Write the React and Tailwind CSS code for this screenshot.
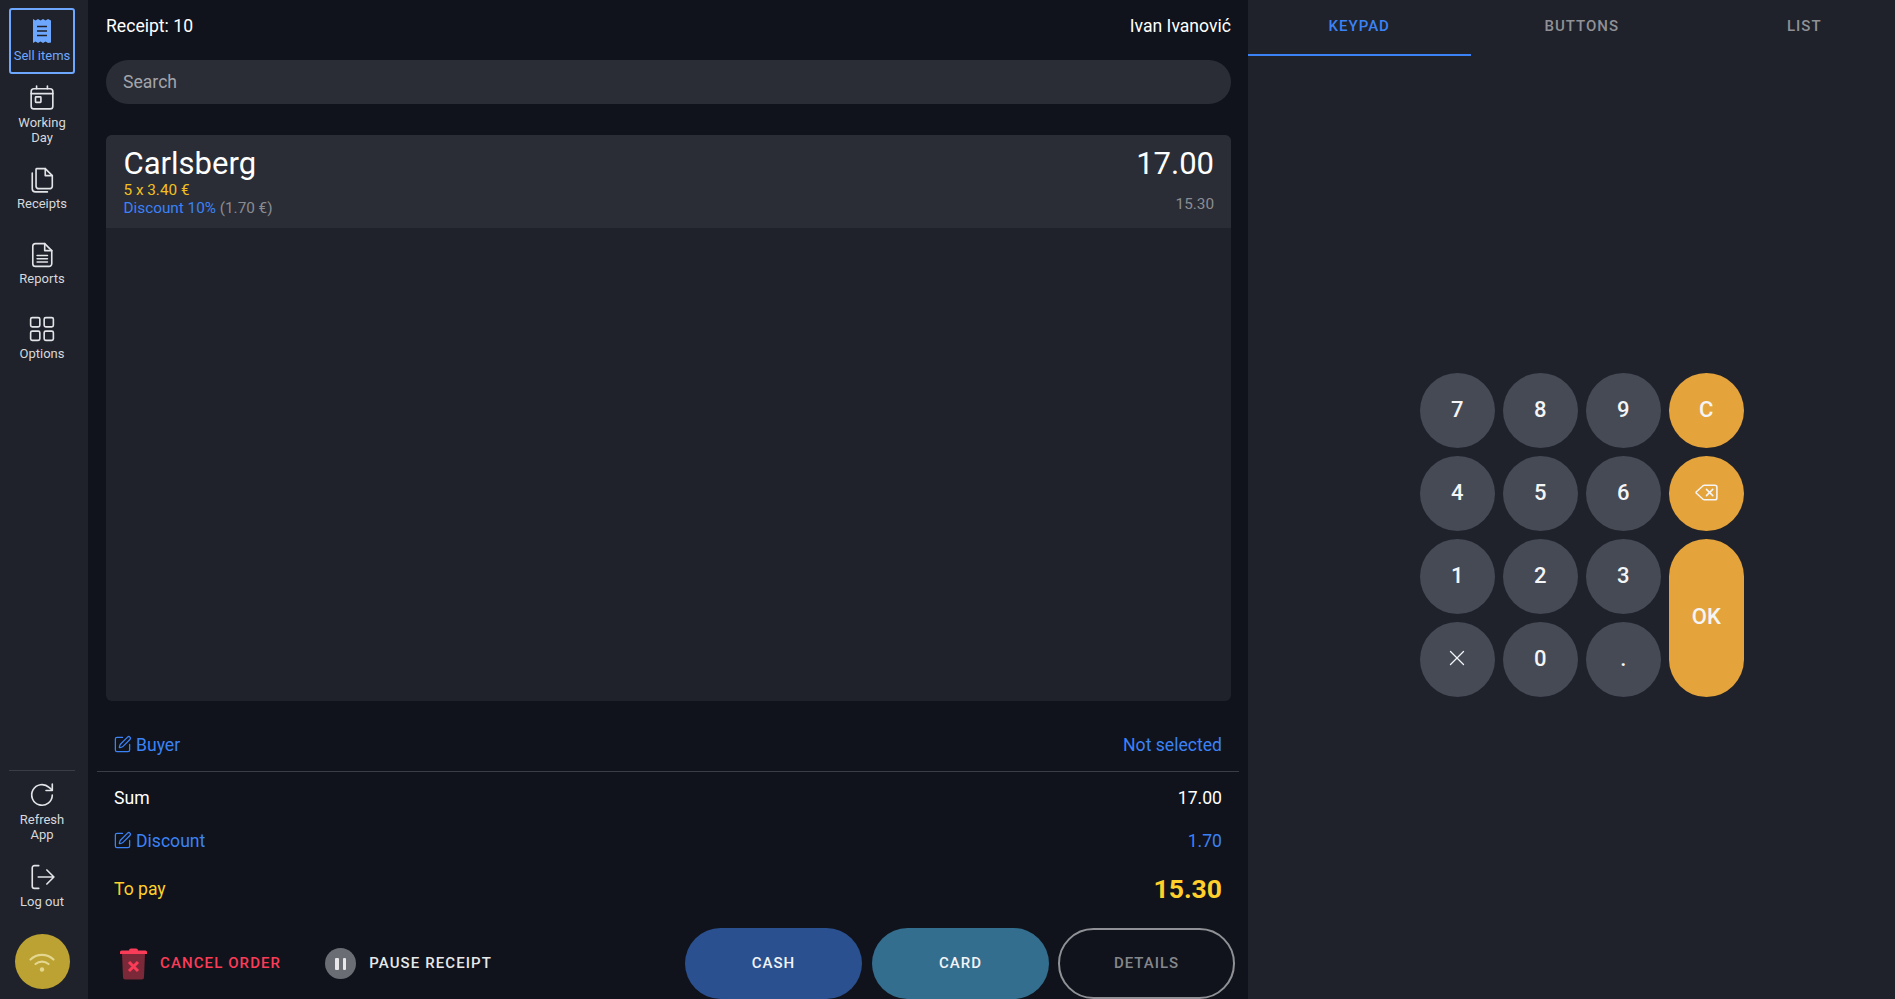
import React from "react";
import { SquarePen, Delete, X } from "lucide-react";

const S = ({ children, w = 26, h = 26 }) => (
  <svg width={w} height={h} viewBox="0 0 24 24" fill="none" stroke="#e2e4e8" strokeWidth="1.5" strokeLinecap="round" strokeLinejoin="round">
    {children}
  </svg>
);

const NavLabel = ({ children }) => (
  <div className="text-[13px] leading-[15px] text-center text-[#d6d8dc]">{children}</div>
);

function Sidebar() {
  return (
    <div className="w-[88px] shrink-0 h-full bg-[#1f222b] flex flex-col items-center pr-[4px]">
      <div className="mt-2 w-[66px] h-[66px] shrink-0 border-2 border-[#6ea8fe] rounded-[3px] flex flex-col items-center text-[#6ea8fe]">
        <svg className="mt-[8px]" width="20" height="26" viewBox="0 0 20 26">
          <path d="M1 1 L3.5 2.5 L6 1 L8.5 2.5 L11 1 L13.5 2.5 L16 1 L19 2.5 V24.5 L16 25 L13.5 23.5 L11 25 L8.5 23.5 L6 25 L3.5 23.5 L1 25 Z" fill="#6ea8fe" />
          <path d="M5 8.5 H15 M5 13 H15 M5 17.5 H15" stroke="#1f222b" strokeWidth="1.6" />
        </svg>
        <span className="text-[13px] leading-[15px] mt-[4px]">Sell items</span>
      </div>
      <div className="mt-[11px] flex flex-col items-center">
        <S>
          <rect x="2" y="3.5" width="20" height="18.5" rx="2.5" />
          <path d="M2 8 H22 M7 1 V3.5 M17 1 V3.5" />
          <rect x="6" y="11" width="5" height="5" rx="0.5" />
        </S>
        <div className="mt-[4px] flex flex-col items-center">
          <NavLabel>Working</NavLabel>
          <NavLabel>Day</NavLabel>
        </div>
      </div>
      <div className="mt-[22px] flex flex-col items-center">
        <S>
          <path d="M7 1.5 H15 L21.5 8 V18 A2.5 2.5 0 0 1 19 20 H9 A2.5 2.5 0 0 1 6.5 18 V2 Z" />
          <path d="M15 1.5 V8 H21.5" />
          <path d="M3 5.5 V20 A3 3 0 0 0 6 23 H17" />
        </S>
        <div className="mt-[3px]"><NavLabel>Receipts</NavLabel></div>
      </div>
      <div className="mt-[31px] flex flex-col items-center">
        <S>
          <path d="M6 1.5 H14.5 L21 8 V20 A2.5 2.5 0 0 1 18.5 22.5 H6 A2.5 2.5 0 0 1 3.5 20 V4 A2.5 2.5 0 0 1 6 1.5 Z" />
          <path d="M14.5 1.5 V8 H21" />
          <path d="M7.5 12.5 H17 M7.5 15.5 H17 M7.5 18.5 H17" />
        </S>
        <div className="mt-[3px]"><NavLabel>Reports</NavLabel></div>
      </div>
      <div className="mt-[30px] flex flex-col items-center">
        <S>
          <rect x="1.5" y="1.5" width="8.5" height="8.5" rx="1.5" />
          <rect x="14" y="1.5" width="8.5" height="8.5" rx="1.5" />
          <rect x="1.5" y="14" width="8.5" height="8.5" rx="1.5" />
          <rect x="14" y="14" width="8.5" height="8.5" rx="1.5" />
        </S>
        <div className="mt-[4px]"><NavLabel>Options</NavLabel></div>
      </div>
      <div className="flex-1" />
      <div className="w-[66px] h-px bg-[#3a3d46] shrink-0" />
      <div className="mt-[11px] flex flex-col items-center">
        <S>
          <path d="M21.5 12 A9.5 9.5 0 1 1 18.5 5 L21.5 7.5" />
          <path d="M21.5 2 V7.8 H15.7" />
        </S>
        <div className="mt-[4px] flex flex-col items-center">
          <NavLabel>Refresh</NavLabel>
          <NavLabel>App</NavLabel>
        </div>
      </div>
      <div className="mt-[22px] flex flex-col items-center">
        <S>
          <path d="M9 1.5 H5 A2 2 0 0 0 3 3.5 V20.5 A2 2 0 0 0 5 22.5 H9" />
          <path d="M8.5 12 H23 M16.5 5.5 L23 12 L16.5 18.5" />
        </S>
        <div className="mt-[4px]"><NavLabel>Log out</NavLabel></div>
      </div>
      <div className="mt-[25px] mb-[10px] w-[55px] h-[55px] shrink-0 rounded-full bg-[#bca232] flex items-center justify-center">
        <svg width="28" height="28" viewBox="0 0 28 28" fill="none" stroke="#e3d68e" strokeWidth="2.2" strokeLinecap="round">
          <path d="M2.5 11.5 A16.5 16.5 0 0 1 25.5 11.5" />
          <path d="M7.5 16 A10 10 0 0 1 20.5 16" />
          <circle cx="14" cy="21.5" r="2.2" fill="#e3d68e" stroke="none" />
        </svg>
      </div>
    </div>
  );
}

const Pill = ({ children, className }) => (
  <button className={`w-[177px] h-[71px] rounded-[36px] flex items-center justify-center text-[15px] font-medium tracking-[1px] ${className}`}>
    {children}
  </button>
);

function Main() {
  return (
    <div className="w-[1160px] shrink-0 h-full bg-[#10131b] flex flex-col">
      <div className="h-[52px] pl-[18px] pr-[17px] shrink-0 flex items-center justify-between text-white text-[17.6px]">
        <span>Receipt: 10</span>
        <span>Ivan Ivanović</span>
      </div>
      <div className="ml-[18px] mr-[17px] mt-[8px] h-[44px] shrink-0 rounded-[22px] bg-[#2a2d36] flex items-center px-[17px] text-[17.6px] text-[#a3a5aa]">
        Search
      </div>
      <div className="ml-[18px] mr-[17px] mt-[31px] h-[566px] shrink-0 rounded-[6px] bg-[#1f222b] overflow-hidden">
        <div className="h-[93px] bg-[#2a2d36] pl-[17.5px] pr-[17px] flex justify-between">
          <div className="flex flex-col">
            <span className="text-[31px] leading-[36px] mt-[11px] text-white">Carlsberg</span>
            <span className="text-[15.3px] leading-[18px] -mt-[1px] text-[#f2c01e]">5 x 3.40 €</span>
            <span className="text-[15.3px] leading-[18px] text-[#8a8c92]"><span className="text-[#3b82f6]">Discount 10%</span> (1.70 €)</span>
          </div>
          <div className="flex flex-col items-end">
            <span className="text-[31px] leading-[36px] mt-[11px] text-white">17.00</span>
            <span className="text-[15.3px] leading-[18px] mt-[13px] text-[#8a8c92]">15.30</span>
          </div>
        </div>
      </div>
      <div className="mt-[27px] px-[26px] h-[34px] shrink-0 flex items-center justify-between text-[17.6px] text-[#3b82f6]">
        <span className="flex items-center gap-[4px] -ml-[1px]"><SquarePen size={19} strokeWidth={1.6} /> Buyer</span>
        <span>Not selected</span>
      </div>
      <div className="mx-[9px] mt-[9px] h-px bg-[#3a3d46] shrink-0" />
      <div className="mt-[8px] px-[26px] h-[36px] shrink-0 flex items-center justify-between text-[17.6px] text-white">
        <span>Sum</span><span>17.00</span>
      </div>
      <div className="mt-[7px] px-[26px] h-[36px] shrink-0 flex items-center justify-between text-[17.6px] text-[#3b82f6]">
        <span className="flex items-center gap-[4px] -ml-[1px]"><SquarePen size={19} strokeWidth={1.6} /> Discount</span><span>1.70</span>
      </div>
      <div className="mt-[12px] px-[26px] h-[36px] shrink-0 flex items-center justify-between text-[17.6px] text-[#ffd02b]">
        <span>To pay</span><span className="text-[26.5px] font-bold">15.30</span>
      </div>
      <div className="mt-auto h-[71px] shrink-0 flex items-center pl-[32px] pr-[13px]">
        <svg width="27" height="32" viewBox="0 0 27 32" className="shrink-0">
          <path d="M9 2.5 Q9 0.5 11 0.5 H16 Q18 0.5 18 2.5 H25.5 Q27 2.5 27 4 V6 H0 V4 Q0 2.5 1.5 2.5 Z" fill="#fb3c58" />
          <path d="M2 6 H25 L24 29 Q24 31.5 21.5 31.5 H5.5 Q3 31.5 3 29 Z" fill="#7b2938" />
          <path d="M9 14 L18 23 M18 14 L9 23" stroke="#fb3c58" strokeWidth="3" />
        </svg>
        <span className="ml-[13px] text-[15px] font-medium tracking-[1.1px] text-[#fb3c58] whitespace-nowrap">CANCEL ORDER</span>
        <span className="ml-[44px] w-[31px] h-[31px] rounded-full bg-[#6b6d74] flex items-center justify-center gap-[4px] shrink-0">
          <span className="w-[3.5px] h-[12px] rounded-[1px] bg-[#e8e8ea]" />
          <span className="w-[3.5px] h-[12px] rounded-[1px] bg-[#e8e8ea]" />
        </span>
        <span className="ml-[13px] text-[15px] font-medium tracking-[1.1px] text-[#e8e8ea] whitespace-nowrap">PAUSE RECEIPT</span>
        <div className="flex-1" />
        <div className="flex gap-[10px]">
          <Pill className="bg-[#2a5090] text-[#f2f4f8]">CASH</Pill>
          <Pill className="bg-[#336e8e] text-[#f2f4f8]">CARD</Pill>
          <Pill className="border-2 border-[#8f9196] text-[#85878c] -ml-px">DETAILS</Pill>
        </div>
      </div>
    </div>
  );
}

const Tab = ({ children, active }) => (
  <div className={`w-[222.5px] h-[56px] shrink-0 flex items-center justify-center text-[15px] font-medium tracking-[1px] ${active ? "border-b-2 border-[#3b82f6] text-[#3b82f6] pb-[1px]" : "text-[#8f9196] pb-[3px]"}`}>
    {children}
  </div>
);

const Key = ({ children, gold, className = "" }) => (
  <button className={`rounded-[38px] flex items-center justify-center text-[22px] font-medium text-[#f4f5f7] pb-[2px] ${gold ? "bg-[#e5a33b]" : "bg-[#454a55]"} ${className}`}>
    {children}
  </button>
);

function Panel() {
  return (
    <div className="w-[667.5px] shrink-0 h-full bg-[#1f222b] flex flex-col">
      <div className="flex shrink-0">
        <Tab active>KEYPAD</Tab>
        <Tab>BUTTONS</Tab>
        <Tab>LIST</Tab>
      </div>
      <div className="flex-1 flex items-center justify-center pt-[14px]">
        <div className="grid grid-cols-[repeat(4,75px)] grid-rows-[repeat(4,75px)] gap-[8px]">
          <Key>7</Key><Key>8</Key><Key>9</Key><Key gold>C</Key>
          <Key>4</Key><Key>5</Key><Key>6</Key><Key gold><Delete size={25} strokeWidth={1.5} /></Key>
          <Key>1</Key><Key>2</Key><Key>3</Key><Key gold className="row-span-2">OK</Key>
          <Key><X size={26} strokeWidth={1.2} /></Key><Key>0</Key><Key>.</Key>
        </div>
      </div>
    </div>
  );
}

export default function App() {
  return (
    <div className="w-[1895px] h-[999px] overflow-hidden flex font-['Roboto',sans-serif]">
      <Sidebar />
      <Main />
      <Panel />
    </div>
  );
}
